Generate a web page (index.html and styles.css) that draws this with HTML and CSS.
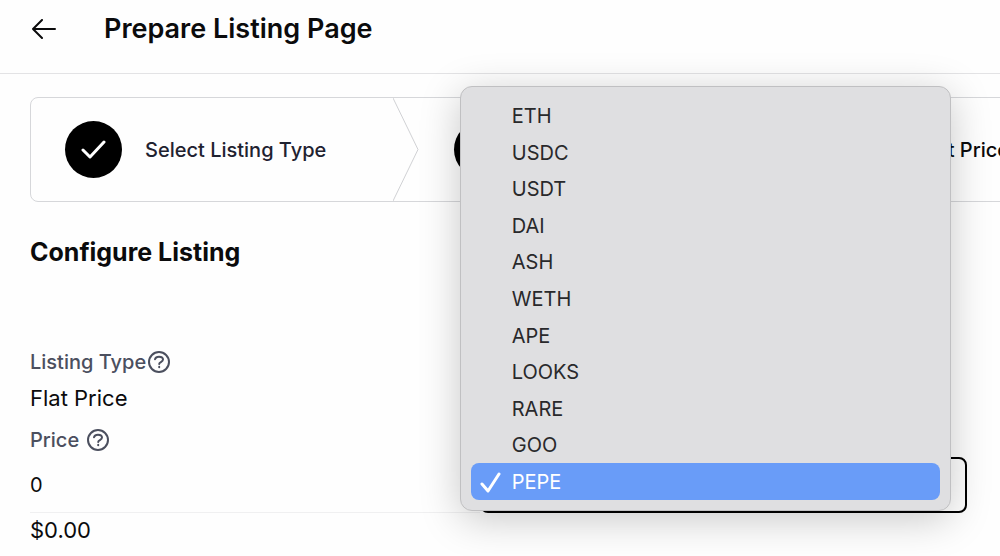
FILE: index.html
```html
<!DOCTYPE html>
<html lang="en">
<head>
<meta charset="utf-8">
<meta name="viewport" content="width=device-width, initial-scale=1">
<title>Prepare Listing Page</title>
<link rel="stylesheet" href="styles.css">
</head>
<body>
<header class="topbar">
  <button class="back" type="button" aria-label="Back">
    <svg width="24" height="20" viewBox="0 0 24 20"><path d="M10 1 1 10l9 9M1 10h22"/></svg>
  </button>
  <h1 class="topbar-title">Prepare Listing Page</h1>
</header>
<main class="page">
  <ol class="steps">
    <li class="step">
      <span class="step-mark"><svg width="25" height="19" viewBox="0 0 25 19"><path d="m2 10 7 7L23 2"/></svg></span>
      <span>Select Listing Type</span>
      <svg class="step-arrow" viewBox="0 0 26 104" preserveAspectRatio="none"><path d="M0 0l25 52L0 104"/></svg>
    </li>
    <li class="step">
      <span class="step-mark"><svg width="25" height="19" viewBox="0 0 25 19"><path d="m2 10 7 7L23 2"/></svg></span>
      <svg class="step-arrow" viewBox="0 0 26 104" preserveAspectRatio="none"><path d="M0 0l25 52L0 104"/></svg>
    </li>
    <li class="step step-current">
      <span class="step-mark"></span>
      <span>Set Price</span>
    </li>
  </ol>
  <h2 class="section-title">Configure Listing</h2>
  <form class="listing">
    <div class="label">Listing Type<svg class="help" viewBox="0 0 22 22"><circle cx="11" cy="11" r="10"/><path d="M7 8.300C7.500 6.600 9 5.700 11 5.700c2.300 0 4 1.200 4 2.900 0 2.500-3.800 2.400-3.800 4.400M11.200 15.800v.4"/></svg></div>
    <div class="value">Flat Price</div>
    <label class="label label-spaced" for="price">Price<svg class="help" viewBox="0 0 22 22"><circle cx="11" cy="11" r="10"/><path d="M7 8.300C7.500 6.600 9 5.700 11 5.700c2.300 0 4 1.200 4 2.900 0 2.500-3.800 2.400-3.800 4.400M11.200 15.800v.4"/></svg></label>
    <div class="price-row">
      <input class="price" id="price" type="text" inputmode="decimal" value="0">
      <div class="currency">
        <select class="currency-select" aria-label="Currency">
          <option>ETH</option><option>USDC</option><option>USDT</option><option>DAI</option><option>ASH</option><option>WETH</option><option>APE</option><option>LOOKS</option><option>RARE</option><option>GOO</option><option selected>PEPE</option>
        </select>
        <div class="menu" role="listbox" aria-label="Currency">
          <button class="menu-item" type="button" role="option">ETH</button>
          <button class="menu-item" type="button" role="option">USDC</button>
          <button class="menu-item" type="button" role="option">USDT</button>
          <button class="menu-item" type="button" role="option">DAI</button>
          <button class="menu-item" type="button" role="option">ASH</button>
          <button class="menu-item" type="button" role="option">WETH</button>
          <button class="menu-item" type="button" role="option">APE</button>
          <button class="menu-item" type="button" role="option">LOOKS</button>
          <button class="menu-item" type="button" role="option">RARE</button>
          <button class="menu-item" type="button" role="option">GOO</button>
          <button class="menu-item menu-item-selected" type="button" role="option" aria-selected="true"><svg class="tick" width="21" height="21" viewBox="0 0 21 21"><path d="m2 12 6 7L19 2"/></svg>PEPE</button>
        </div>
      </div>
    </div>
    <output class="total" for="price">$0.00</output>
  </form>
</main>
</body>
</html>
```

FILE: styles.css
```css
* { box-sizing: border-box; }

body {
  margin: 0;
  overflow: hidden;
  background: #fefefe;
  color: #0b0b0c;
  font-family: Inter, "Liberation Sans", sans-serif;
  font-size: 20px;
}

svg { fill: none; stroke: currentColor; stroke-linecap: round; stroke-linejoin: round; stroke-width: 2; flex: none; }
button, input, select { font: inherit; color: inherit; }

.topbar {
  display: flex;
  align-items: center;
  gap: 48px;
  padding: 12px 32px 28px;
  border-bottom: 1px solid #e3e3e5;
}
.back { display: flex; padding: 0; border: 0; background: none; }
.topbar-title { margin: 0; font-size: 27px; line-height: 33px; font-weight: 600; }

.page { padding: 23px 33px 24px 30px; }

.steps {
  display: flex;
  width: 1167px;
  margin: 0;
  padding: 0;
  border: 1px solid #d6d7da;
  border-radius: 8px;
  list-style: none;
  font-weight: 500;
}
.step {
  position: relative;
  display: flex;
  flex: 0 0 389px;
  align-items: center;
  gap: 23px;
  padding: 23px 34px;
  color: #1f2230;
}
.step-current { color: #0b0b0c; }
.step-mark {
  display: flex;
  align-items: center;
  justify-content: center;
  width: 57px;
  height: 57px;
  border-radius: 50%;
  background: #000;
  color: #fff;
}
.step-mark svg { stroke-width: 3; }
.step-arrow {
  position: absolute;
  top: 0;
  right: 1px;
  width: 26px;
  height: 100%;
  color: #d0d1d4;
  stroke-width: 1;
}

.section-title { margin: 32px 0 78px; font-size: 25px; line-height: 36px; font-weight: 700; }

.listing { display: flex; flex-direction: column; }
.label { display: flex; align-items: center; gap: 2px; color: #4b4f5e; font-weight: 500; line-height: 28px; }
.label-spaced { gap: 8px; }
.help { width: 22px; height: 22px; }
.value { padding: 4px 0 10px; font-size: 22px; line-height: 36px; }
.total { font-size: 22px; line-height: 34px; }

.price-row { display: flex; margin-top: 3px; }
.price {
  width: 48%;
  min-width: 0;
  height: 56px;
  padding: 0;
  border: 0;
  border-bottom: 1px solid #f0f0f1;
  outline: 0;
  background: transparent;
}
.currency { position: relative; flex: 1; }
.currency-select {
  width: 100%;
  height: 56px;
  padding: 0 20px;
  border: 2px solid #000;
  border-radius: 8px;
  background: #fff;
  appearance: none;
}
.menu {
  position: absolute;
  bottom: 2px;
  left: -20px;
  right: 16px;
  display: grid;
  grid-auto-rows: 1fr;
  height: 425px;
  padding: 11px 10px 10px;
  border: 1px solid #c0c0c2;
  border-radius: 12px;
  background: #dfdfe1;
  box-shadow: 0 8px 40px rgba(0, 0, 0, .22);
}
.menu-item {
  position: relative;
  padding: 0 41px;
  border: 0;
  border-radius: 8px;
  background: none;
  color: #29292b;
  text-align: left;
}
.menu-item-selected { background: #699cf8; color: #fff; }
.tick { position: absolute; top: 9px; left: 9px; stroke-width: 3; }
```
